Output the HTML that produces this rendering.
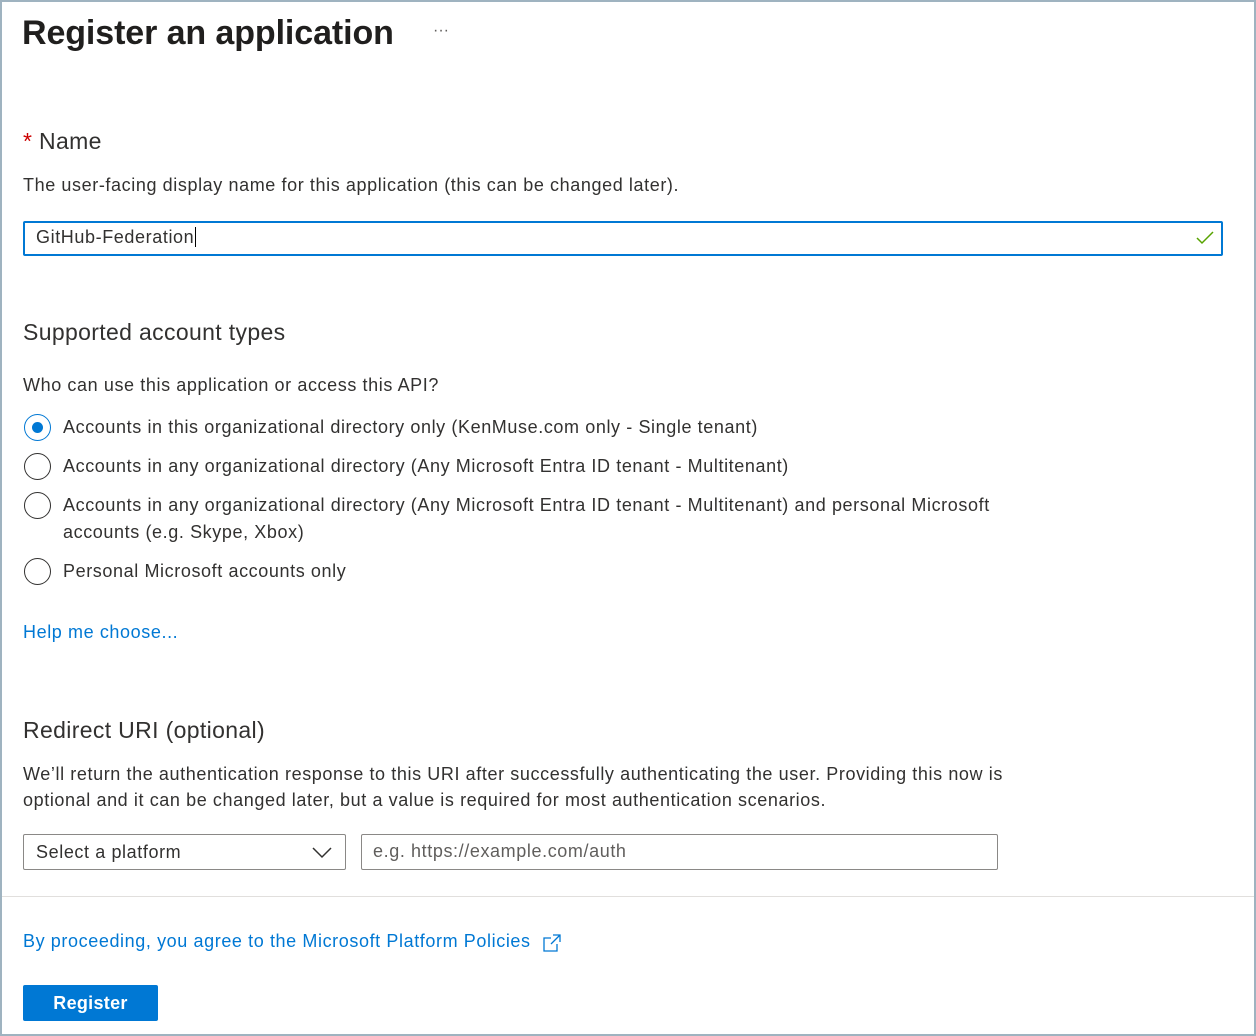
<!DOCTYPE html>
<html><head><style>
*{margin:0;padding:0;box-sizing:border-box}
body{width:1256px;height:1036px;background:#9fb3c0;font-family:"Liberation Sans",sans-serif;color:#323130;position:relative;overflow:hidden}
.pg{position:absolute;left:2px;top:2px;width:1252px;height:1032px;background:#fff}
.a{position:absolute;white-space:nowrap}
.t{font-size:18px;letter-spacing:0.6px}
.h{font-size:23px;letter-spacing:0.35px}
.rad{position:absolute;left:24px;width:27px;height:27px;border:1.5px solid #323130;border-radius:50%}
.rad.on{border-color:#0078d4}
.rad.on::after{content:"";position:absolute;left:6.5px;top:6.5px;width:11px;height:11px;border-radius:50%;background:#0078d4}
</style></head><body><div class="pg"></div>
<div class="a" style="left:22px;top:14px;font-size:34px;font-weight:bold;color:#201f1e;letter-spacing:-0.1px">Register an application</div>
<div class="a" style="left:433px;top:22px;font-size:16px;color:#605e5c">···</div>
<div class="a h" style="left:23px;top:128px"><span style="color:#c00">*</span> Name</div>
<div class="a t" style="left:23px;top:175px">The user-facing display name for this application (this can be changed later).</div>
<div class="a" style="left:23px;top:221px;width:1200px;height:35px;border:2px solid #0078d4;border-radius:2px"></div>
<div class="a t" style="left:36px;top:227px">GitHub-Federation<span style="border-left:1.5px solid #000;margin-left:1px"></span></div>
<svg class="a" style="left:1195px;top:229px" width="20" height="18"><path d="M2 9l5 5 11-11" stroke="#57a300" stroke-width="1.5" fill="none"/></svg>
<div class="a h" style="left:23px;top:319px">Supported account types</div>
<div class="a t" style="left:23px;top:375px">Who can use this application or access this API?</div>
<div class="rad on" style="top:414px"></div>
<div class="a t" style="left:63px;top:417px">Accounts in this organizational directory only (KenMuse.com only - Single tenant)</div>
<div class="rad" style="top:453px"></div>
<div class="a t" style="left:63px;top:456px">Accounts in any organizational directory (Any Microsoft Entra ID tenant - Multitenant)</div>
<div class="rad" style="top:492px"></div>
<div class="a t" style="left:63px;line-height:27px;top:492px">Accounts in any organizational directory (Any Microsoft Entra ID tenant - Multitenant) and personal Microsoft<br>accounts (e.g. Skype, Xbox)</div>
<div class="rad" style="top:558px"></div>
<div class="a t" style="left:63px;top:561px">Personal Microsoft accounts only</div>
<div class="a t" style="left:23px;top:622px;color:#0078d4">Help me choose...</div>
<div class="a h" style="left:23px;top:717px">Redirect URI (optional)</div>
<div class="a t" style="left:23px;line-height:26px;top:761px">We’ll return the authentication response to this URI after successfully authenticating the user. Providing this now is<br>optional and it can be changed later, but a value is required for most authentication scenarios.</div>
<div class="a" style="left:23px;top:834px;width:323px;height:36px;border:1px solid #8a8886;border-radius:2px"></div>
<div class="a t" style="left:36px;top:842px">Select a platform</div>
<svg class="a" style="left:312px;top:845px" width="20" height="14"><path d="M1 3l9 9 9-9" stroke="#323130" stroke-width="1.5" fill="none"/></svg>
<div class="a" style="left:361px;top:834px;width:637px;height:36px;border:1px solid #8a8886;border-radius:2px"></div>
<div class="a t" style="left:373px;top:841px;color:#605e5c">e.g. https://example.com/auth</div>
<div class="a" style="left:2px;top:896px;width:1252px;height:1px;background:#e1dfdd"></div>
<div class="a t" style="left:23px;top:931px;color:#0078d4">By proceeding, you agree to the Microsoft Platform Policies</div>
<svg class="a" style="left:541px;top:933px" width="22" height="20"><path d="M10 5H3v13h13v-7M12 2h7v7M19 2l-9 9" stroke="#0078d4" stroke-width="1.3" fill="none"/></svg>
<div class="a" style="left:23px;top:985px;width:135px;height:36px;background:#0078d4;border-radius:2px;color:#fff;font-weight:bold;font-size:18px;letter-spacing:0.3px;text-align:center;line-height:36px">Register</div>
</body></html>
